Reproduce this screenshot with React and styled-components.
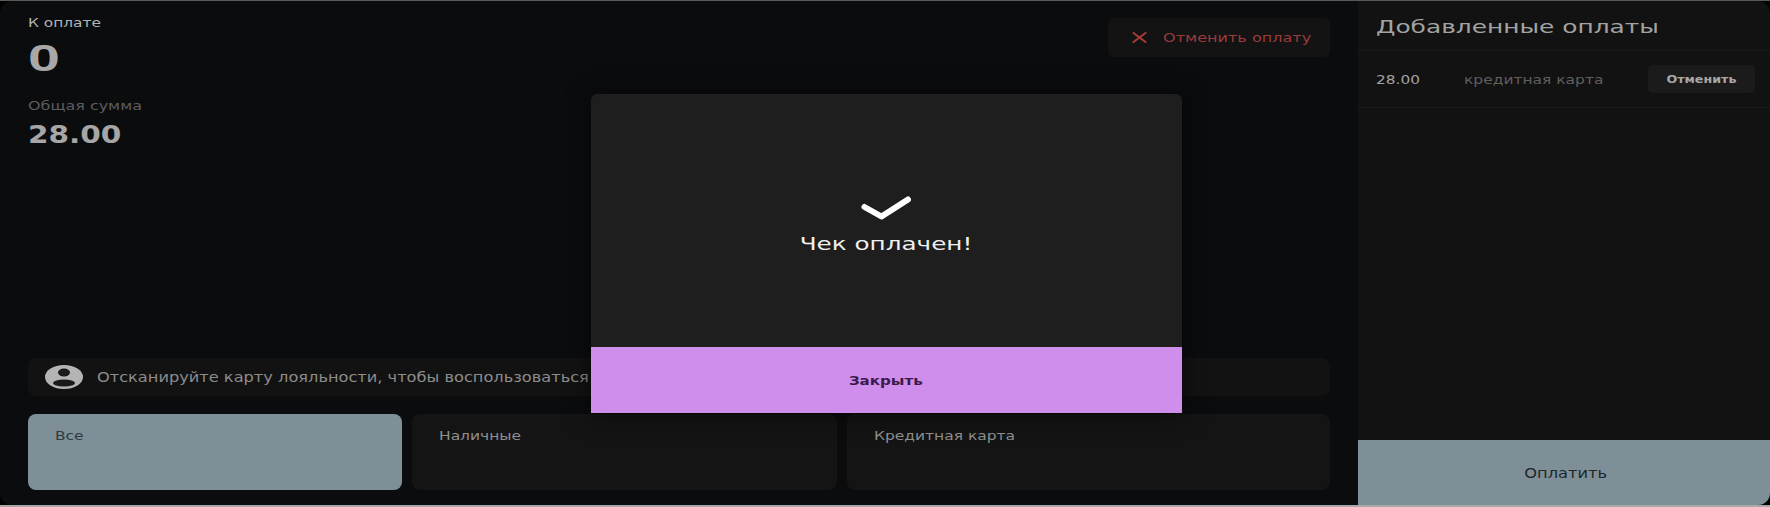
import React from "react";
import styled, { createGlobalStyle } from "styled-components";

const GlobalStyle = createGlobalStyle`
  html, body {
    margin: 0;
    padding: 0;
    background: #000;
  }
  * {
    box-sizing: border-box;
  }
`;

const App = () => {
  return (
    <>
      <GlobalStyle />
      <Shell>
        <Frame>
          <Main>
            <Top>
              <Totals>
                <DueLabel>К оплате</DueLabel>
                <DueValue>0</DueValue>
                <TotalLabel>Общая сумма</TotalLabel>
                <TotalValue>28.00</TotalValue>
              </Totals>
              <CancelPayment>
                <svg width="15" height="11" viewBox="0 0 15 11" fill="none">
                  <path d="M1.5 1L13.5 10M13.5 1L1.5 10" stroke="#a83a3a" strokeWidth="2" strokeLinecap="round" />
                </svg>
                <Wide $x={1.236} $origin="left">Отменить оплату</Wide>
              </CancelPayment>
            </Top>
            <Loyalty>
              <svg width="38" height="24" viewBox="0 0 38 24">
                <ellipse cx="19" cy="12" rx="19" ry="12" fill="#b4b4b4" />
                <ellipse cx="19" cy="7.5" rx="6" ry="4" fill="#1a1a1a" />
                <ellipse cx="19" cy="18" rx="11" ry="3.6" fill="#1a1a1a" />
              </svg>
              <Wide $x={1.157} $origin="left">Отсканируйте карту лояльности, чтобы воспользоваться</Wide>
            </Loyalty>
            <Methods>
              <Method $active $width="374px"><Wide $x={1.19} $origin="left">Все</Wide></Method>
              <Method $width="425px"><Wide $x={1.19} $origin="left">Наличные</Wide></Method>
              <Method $width="483px"><Wide $x={1.19} $origin="left">Кредитная карта</Wide></Method>
            </Methods>
          </Main>
          <Side>
            <SideHeader><Wide $x={1.38} $origin="left">Добавленные оплаты</Wide></SideHeader>
            <PaymentRow>
              <PaymentSum><Wide $x={1.18} $origin="left">28.00</Wide></PaymentSum>
              <PaymentType><Wide $x={1.19} $origin="left">кредитная карта</Wide></PaymentType>
              <UndoButton><Wide $x={1.15}>Отменить</Wide></UndoButton>
            </PaymentRow>
            <PayButton><Wide $x={1.16}>Оплатить</Wide></PayButton>
          </Side>
          <Overlay>
            <Modal>
              <ModalBody>
                <svg width="50" height="24" viewBox="0 0 50 24" fill="none">
                  <path d="M3.5 11L20.5 20.5L47 3.5" stroke="#ffffff" strokeWidth="6" strokeLinecap="round" strokeLinejoin="round" />
                </svg>
                <ModalText>Чек оплачен!</ModalText>
              </ModalBody>
              <CloseButton><Wide $x={1.16}>Закрыть</Wide></CloseButton>
            </Modal>
          </Overlay>
        </Frame>
      </Shell>
    </>
  );
};

export default App;

const Shell = styled.div`
  width: 1770px;
  height: 507px;
  border-top: 1px solid #5a5a5a;
  border-bottom: 2px solid #a8a8a8;
  background: #000;
`;
const Frame = styled.div`
  position: relative;
  display: flex;
  height: 504px;
  overflow: hidden;
  border-radius: 12px;
  background: #0b0c0e;
  font-family: "DejaVu Sans", sans-serif;
`;
const Wide = styled.span`
  display: inline-block;
  white-space: nowrap;
  transform-origin: ${(props) => props.$origin || "center"} center;
  transform: scaleX(${(props) => props.$x});
`;
const Main = styled.div`
  width: 1358px;
  display: flex;
  flex-direction: column;
  padding: 0 28px 15px;
`;
const Top = styled.div`
  flex: 1;
  display: flex;
  justify-content: space-between;
  align-items: flex-start;
  padding-top: 15px;
`;
const Totals = styled.div`
  display: flex;
  flex-direction: column;
`;
const DueLabel = styled.div`
  font-size: 12px;
  line-height: 15px;
  color: #b4b4b4;
  transform-origin: left center;
  transform: scaleX(1.28);
`;
const DueValue = styled.div`
  margin-top: 6px;
  font-family: "Liberation Sans", sans-serif;
  font-size: 37px;
  line-height: 44px;
  font-weight: 700;
  color: #a8a8a8;
  transform-origin: left center;
  transform: scaleX(1.55);
`;
const TotalLabel = styled.div`
  margin-top: 18px;
  font-size: 12px;
  line-height: 15px;
  color: #5d5d5d;
  transform-origin: left center;
  transform: scaleX(1.33);
`;
const TotalValue = styled.div`
  margin-top: 7px;
  font-size: 24px;
  line-height: 28px;
  font-weight: 700;
  color: #a6a6a6;
  transform-origin: left center;
  transform: scaleX(1.23);
`;
const CancelPayment = styled.div`
  width: 222px;
  height: 39px;
  margin-top: 2px;
  display: flex;
  align-items: center;
  gap: 16px;
  padding-left: 24px;
  border-radius: 6px;
  background: #131313;
  font-size: 13px;
  color: #9a3b3b;
`;
const Loyalty = styled.div`
  height: 38px;
  display: flex;
  align-items: center;
  gap: 14px;
  padding-left: 17px;
  border-radius: 8px;
  background: #121212;
  font-size: 14px;
  color: #8c8c8c;
`;
const Methods = styled.div`
  display: flex;
  gap: 10px;
  margin-top: 18px;
`;
const Method = styled.div`
  width: ${(props) => props.$width};
  height: 76px;
  padding: 14px 27px;
  border-radius: 8px;
  background: ${(props) => (props.$active ? "#7e8f97" : "#141414")};
  font-size: 13px;
  line-height: 16px;
  color: ${(props) => (props.$active ? "#2f3a40" : "#8f8f8f")};
`;
const Side = styled.div`
  flex: 1;
  display: flex;
  flex-direction: column;
  background: #121212;
`;
const SideHeader = styled.div`
  height: 50px;
  padding-left: 18px;
  border-bottom: 1px solid #1a1a1a;
  font-size: 18px;
  line-height: 52px;
  color: #a3a3a3;
`;
const PaymentRow = styled.div`
  height: 57px;
  display: flex;
  align-items: center;
  padding: 0 15px 0 18px;
  border-bottom: 1px solid #1a1a1a;
`;
const PaymentSum = styled.div`
  width: 88px;
  font-size: 13px;
  color: #a3a3a3;
`;
const PaymentType = styled.div`
  flex: 1;
  font-size: 13px;
  color: #5f5f5f;
`;
const UndoButton = styled.div`
  width: 107px;
  height: 28px;
  display: flex;
  align-items: center;
  justify-content: center;
  border-radius: 5px;
  background: #1b1b1b;
  font-size: 11px;
  font-weight: 700;
  color: #a8a8a8;
`;
const PayButton = styled.div`
  margin-top: auto;
  height: 65px;
  padding: 1px 0 0 4px;
  display: flex;
  align-items: center;
  justify-content: center;
  background: #7e8f97;
  font-size: 14px;
  color: #20282c;
`;
const Overlay = styled.div`
  position: absolute;
  inset: 0;
  display: flex;
  justify-content: center;
  align-items: center;
  padding-left: 2px;
`;
const Modal = styled.div`
  width: 591px;
  height: 319px;
  display: flex;
  flex-direction: column;
  overflow: hidden;
  border-radius: 6px 6px 0 0;
  background: #1e1e1e;
  box-shadow: 0 0 24px rgba(0, 0, 0, 0.6);
`;
const ModalBody = styled.div`
  flex: 1;
  display: flex;
  flex-direction: column;
  align-items: center;
  padding-top: 102px;
`;
const ModalText = styled.div`
  margin-top: 13px;
  font-size: 18px;
  line-height: 22px;
  color: #f0f0f0;
  transform: scaleX(1.37);
`;
const CloseButton = styled.div`
  height: 66px;
  padding-top: 1px;
  display: flex;
  align-items: center;
  justify-content: center;
  background: #cf8dec;
  font-size: 13px;
  font-weight: 700;
  color: #3a1a4a;
`;
